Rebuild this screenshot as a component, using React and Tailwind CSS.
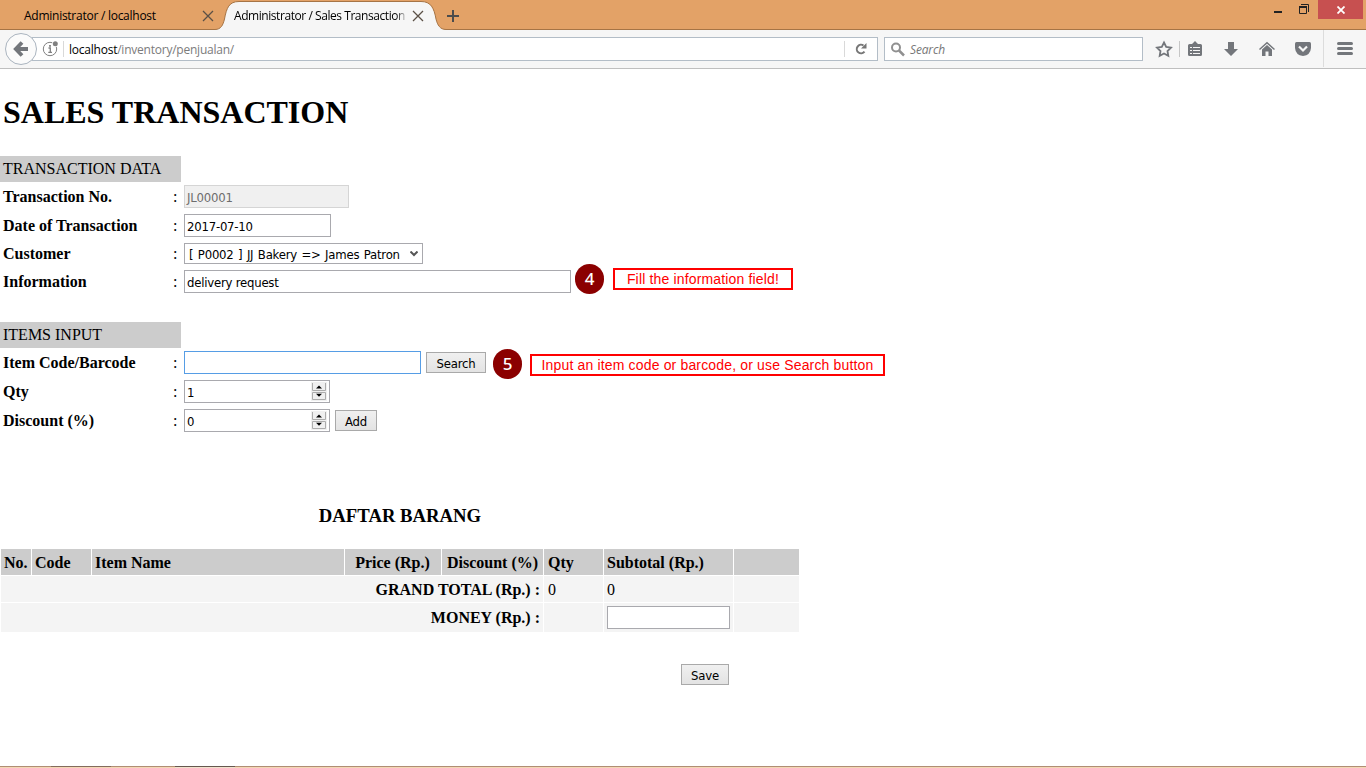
import React from "react";

const ui = "font-['Open_Sans','Noto_Sans',sans-serif]";
const field = "font-['DejaVu_Sans_Condensed','DejaVu_Sans',sans-serif] [font-stretch:condensed] text-[13px] leading-[17px] tracking-[-0.22px] text-black";

function CloseX() {
  return (
    <svg width="12" height="12" viewBox="0 0 12 12" className="shrink-0">
      <path d="M1 1L11 11M11 1L1 11" stroke="#5b5046" strokeWidth="1.3" fill="none" />
    </svg>
  );
}

function TabStrip() {
  return (
    <div className={`relative flex h-[30px] bg-[#e3a267] text-[12px] leading-4 text-black ${ui}`}>
      <div className="absolute inset-x-0 bottom-0 h-px bg-[#a67445]" />
      <div className="flex h-[30px] w-[218px] items-center pt-px pl-6">
        <span className="w-[178px] whitespace-nowrap tracking-[-0.26px]">Administrator / localhost</span>
        <CloseX />
      </div>
      <div className="relative h-[30px] w-[226px]">
        <svg width="242" height="30" viewBox="0 0 242 30" className="absolute top-0 -left-[6px]">
          <path
            d="M0 30V29.5H3C9 29.5 11 25 12.500 19C14.500 8 17 1.500 27 1.500H209C219 1.500 222 8 224 19C225.500 25 228 29.500 234 29.500H241V30Z"
            fill="#f6f6f6"
          />
          <path
            d="M0 29.500H3C9 29.500 11 25 12.500 19C14.500 8 17 1.500 27 1.500H209C219 1.500 222 8 224 19C225.500 25 228 29.500 234 29.500H241"
            fill="none"
            stroke="#a67445"
          />
          <path d="M7 29.500H230" stroke="#f6f6f6" />
        </svg>
        <div className="relative flex h-[30px] items-center pt-px pl-4">
          <span className="w-[178px] whitespace-nowrap">
            <span className="block w-[174px] tracking-[-0.44px] [mask-image:linear-gradient(to_right,black_93%,transparent)]">
              Administrator / Sales Transaction
            </span>
          </span>
          <CloseX />
        </div>
      </div>
      <div className="relative flex h-[30px] items-center pt-0.5 pl-[3px]">
        <svg width="12" height="12" viewBox="0 0 12 12">
          <path d="M6 0V12M0 6H12" stroke="#4c4c4c" strokeWidth="2" />
        </svg>
      </div>
      <div className="ml-auto flex">
        <svg width="45" height="19" viewBox="0 0 45 19">
          <path d="M1 12H9" stroke="#222" strokeWidth="2" />
          <path d="M26.500 6.500H33.500V13.500H26.500Z" fill="none" stroke="#222" />
          <path d="M26 7H34" stroke="#222" strokeWidth="2" />
          <path d="M28 4.500H35.500V12" fill="none" stroke="#222" />
        </svg>
        <div className="mr-[3px] flex h-[19px] w-[45px] items-center justify-center bg-[#c75050]">
          <svg width="8" height="8" viewBox="0 0 8 8">
            <path d="M0.500 0.500L7.500 7.500M7.500 0.500L0.500 7.500" stroke="#fff" strokeWidth="1.8" />
          </svg>
        </div>
      </div>
    </div>
  );
}

function Toolbar() {
  return (
    <div className={`flex h-[39px] items-start border-b border-[#bfbfbf] bg-[#f6f6f6] ${ui}`}>
      <svg width="34" height="34" viewBox="0 0 34 34" className="relative z-10 mt-[2px] ml-1 shrink-0">
        <circle cx="17" cy="17" r="15.500" fill="#fbfbfb" stroke="#aab4bf" />
        <path d="M24 17H12M18 10.500L11.800 17L18 23.500" fill="none" stroke="#73767b" strokeWidth="3.800" />
      </svg>
      <div className="mt-[7px] -ml-[6px] flex h-6 w-[846px] items-center border border-[#b3bdc7] bg-white">
        <svg width="18" height="18" viewBox="0 0 18 18" className="ml-[8px]">
          <circle cx="9" cy="9" r="6.700" fill="none" stroke="#808080" />
          <path d="M7.500 8H9.300V12M7.300 12.300H11" fill="none" stroke="#808080" strokeWidth="1.300" />
          <rect x="8.100" y="5" width="1.800" height="1.800" fill="#808080" />
          <circle cx="14.300" cy="3.700" r="3.200" fill="#fff" />
          <circle cx="14.300" cy="3.700" r="2.500" fill="#808080" />
        </svg>
        <div className="ml-[4px] h-4 w-px bg-[#d9d9d9]" />
        <span className="ml-[5px] pt-[2px] text-[12px] tracking-[-0.23px] text-[#7b7b7b]">
          <span className="text-black">localhost</span>/inventory/penjualan/
        </span>
        <div className="ml-auto h-4 w-px bg-[#d9d9d9]" />
        <svg width="12" height="12" viewBox="0 0 12 12" className="mr-[10px] ml-[10px]">
          <path d="M9.500 8.700A4.300 4.300 0 1 1 8.500 2.500" fill="none" stroke="#777" strokeWidth="2" />
          <path d="M6 5.500H11.500V0Z" fill="#777" />
        </svg>
      </div>
      <div className="mt-[7px] ml-[6px] flex h-6 w-[259px] items-center border border-[#b3bdc7] bg-white">
        <svg width="15" height="15" viewBox="0 0 15 15" className="ml-[5px]">
          <circle cx="6" cy="5.500" r="4" fill="none" stroke="#909090" strokeWidth="2" />
          <path d="M9 8.500L14 13.500" stroke="#909090" strokeWidth="2.500" />
        </svg>
        <span className="ml-[5px] pt-[2px] text-[12px] tracking-[-0.15px] text-[#777] italic">Search</span>
      </div>
      <svg width="223" height="38" viewBox="0 0 223 38" className="shrink-0">
        <path
          d="M21 12.500L23.200 16.900L28 17.600L24.500 21L25.300 25.800L21 23.500L16.700 25.800L17.500 21L14 17.600L18.800 16.900Z"
          fill="none"
          stroke="#73767b"
          strokeWidth="1.800"
        />
        <path d="M36.500 11V27" stroke="#c6c6c6" />
        <path d="M45 15.500Q45 14 46.500 14H49L52 11L55 14H57.500Q59 14 59 15.500V24.500Q59 26 57.500 26H46.500Q45 26 45 24.500Z" fill="#73767b" />
        <path d="M47 17.500H49M50 17.500H57M47 20.500H49M50 20.500H57M47 23.500H49M50 23.500H57" stroke="#f6f6f6" />
        <path d="M85 12H91V19H95L88 26L81 19H85Z" fill="#73767b" />
        <path d="M116.500 19.500L124 12.800L131.500 19.500" fill="none" stroke="#73767b" strokeWidth="1.500" />
        <path d="M119 19.500L124 15L129 19.500V26H125.500V21.500H122.500V26H119Z" fill="#73767b" />
        <path d="M152 13.500Q152 12 153.500 12H166.500Q168 12 168 13.500V18Q167.500 25 160 26Q152.500 25 152 18Z" fill="#73767b" />
        <path d="M156 16.500L160 20.500L164 16.500" fill="none" stroke="#f6f6f6" strokeWidth="2.200" />
        <path d="M180.500 0V37" stroke="#dcdcdc" />
        <path d="M195.500 13.500H208.500M195.500 18.500H208.500M195.500 23.500H208.500" stroke="#73767b" strokeWidth="3" strokeLinecap="round" />
      </svg>
    </div>
  );
}

function SectionHead({ children }) {
  return <div className="h-[26px] w-[181px] bg-[#ccc] pl-[3px] leading-[26px]">{children}</div>;
}

function Row({ label, short, children }) {
  return (
    <div className={`relative flex items-center ${short ? "h-[27px]" : "h-[29px]"}`}>
      <div className="w-[173px] pt-px pl-[3px] leading-[18px] font-bold">{label}</div>
      <div className="w-[11px] pt-px leading-[18px]">:</div>
      {children}
    </div>
  );
}

function Box({ className, children }) {
  return <div className={`flex h-[23px] items-center border pt-px pl-[2px] ${className} ${field}`}>{children}</div>;
}

function Button({ className, children }) {
  return (
    <button className={`flex h-[21px] items-center justify-center border border-[#a9a9a9] bg-linear-to-b from-[#f0f0f0] to-[#e3e3e3] pt-px ${className} ${field}`}>
      {children}
    </button>
  );
}

function Spinner({ value }) {
  return (
    <Box className="w-[146px] justify-between border-[#a9a9ae] bg-white pr-[2px]">
      <span>{value}</span>
      <svg width="16" height="19" viewBox="0 0 16 19" className="-mt-[2px]">
        <rect width="16" height="19" fill="#f0f0f0" />
        <path d="M1.500 1V8.500H14.500V1M1.500 10.500H14.500V17.500H1.500Z" fill="none" stroke="#acacac" />
        <path d="M5 6.500L8 3.500L11 6.500Z" fill="#000" />
        <path d="M5 11.800L8 14.800L11 11.800Z" fill="#000" />
      </svg>
    </Box>
  );
}

function Step({ n, className }) {
  return (
    <div className={`absolute flex h-[30px] w-[29px] items-center justify-center rounded-full bg-[#8b0000] pb-px font-['Noto_Sans',sans-serif] text-[17px] leading-none font-medium text-white ${className}`}>
      {n}
    </div>
  );
}

function Note({ className, children }) {
  return (
    <div className={`absolute flex h-[22px] items-center justify-center border-2 border-[#ff0000] bg-white font-['Liberation_Sans',sans-serif] text-[14px] leading-4 tracking-[0.16px] whitespace-nowrap text-[#ff0000] ${className}`}>
      {children}
    </div>
  );
}

export default function App() {
  return (
    <div className="flex h-[768px] w-[1366px] flex-col overflow-hidden bg-white font-['Liberation_Serif',serif] text-[16px] text-black">
      <TabStrip />
      <Toolbar />
      <main className="flex-1">
        <h1 className="pt-[25px] pl-[3px] text-[32px] leading-[37px] font-bold">SALES TRANSACTION</h1>
        <section className="pt-[25px]">
          <SectionHead>TRANSACTION DATA</SectionHead>
          <Row label="Transaction No.">
            <Box className="w-[165px] border-[#d5d5d5] bg-[#f0f0f0]">
              <span className="text-[#6d6d6d]">JL00001</span>
            </Box>
          </Row>
          <Row label="Date of Transaction">
            <Box className="w-[147px] border-[#a9a9ae]">2017-07-10</Box>
          </Row>
          <Row label="Customer" short>
            <div className={`flex h-[21px] w-[239px] items-center justify-between border border-[#a9a9ae] pt-px pr-[4px] pl-[4px] whitespace-nowrap ${field}`}>
              <span className="[word-spacing:1px]">[ P0002 ] JJ Bakery =&gt; James Patron</span>
              <svg width="8" height="6" viewBox="0 0 8 6" className="-mt-px">
                <path d="M0.500 0.500L4 4L7.500 0.500" fill="none" stroke="#555" strokeWidth="2" />
              </svg>
            </div>
          </Row>
          <Row label="Information">
            <Box className="w-[387px] border-[#a9a9ae]">delivery request</Box>
            <Step n="4" className="top-[-3px] left-[575px]" />
            <Note className="top-px left-[613px] w-[180px]">Fill the information field!</Note>
          </Row>
        </section>
        <section className="pt-[26px]">
          <SectionHead>ITEMS INPUT</SectionHead>
          <Row label="Item Code/Barcode">
            <Box className="w-[237px] border-[#569de5]" />
            <Button className="ml-[5px] w-[60px]">Search</Button>
            <Step n="5" className="top-[1px] left-[493px]" />
            <Note className="top-[6px] left-[530px] w-[355px]">Input an item code or barcode, or use Search button</Note>
          </Row>
          <Row label="Qty">
            <Spinner value="1" />
          </Row>
          <Row label="Discount (%)">
            <Spinner value="0" />
            <Button className="ml-[5px] w-[42px]">Add</Button>
          </Row>
        </section>
        <section className="w-[800px] pt-[69px]">
          <h3 className="text-center text-[18.720px] leading-[24px] font-bold">DAFTAR BARANG</h3>
          <div className="mt-[21px] ml-px grid w-[798px] grid-cols-[30px_59px_252px_96px_101px_59px_129px_65px] grid-rows-[26px_26px_29px] gap-px font-bold whitespace-nowrap *:flex *:items-center *:px-[3px] *:pt-[2px]">
            <div className="bg-[#ccc]">No.</div>
            <div className="bg-[#ccc]">Code</div>
            <div className="bg-[#ccc]">Item Name</div>
            <div className="justify-center bg-[#ccc]">
              <span className="-ml-px">Price (Rp.)</span>
            </div>
            <div className="justify-center bg-[#ccc]">Discount (%)</div>
            <div className="bg-[#ccc]">
              <span className="ml-px">Qty</span>
            </div>
            <div className="bg-[#ccc]">Subtotal (Rp.)</div>
            <div className="bg-[#ccc]" />
            <div className="col-span-5 justify-end bg-[#f4f4f4]">GRAND TOTAL (Rp.) :</div>
            <div className="bg-[#f4f4f4] font-normal">
              <span className="ml-px">0</span>
            </div>
            <div className="bg-[#f4f4f4] font-normal">0</div>
            <div className="bg-[#f4f4f4]" />
            <div className="col-span-5 justify-end bg-[#f4f4f4]">
              <span className="-mt-[2px]">MONEY (Rp.) :</span>
            </div>
            <div className="bg-[#f4f4f4]" />
            <div className="bg-[#f4f4f4]">
              <div className="-mt-[2px] h-[23px] w-[123px] border border-[#a9a9ae] bg-white" />
            </div>
            <div className="bg-[#f4f4f4]" />
          </div>
          <div className="flex pt-[32px] pl-[681px]">
            <Button className="w-[48px]">Save</Button>
          </div>
        </section>
      </main>
      <footer className="flex h-[2px] shrink-0">
        <div className="w-[51px] border-t border-[#b08d74] bg-[#f3d8b4]" />
        <div className="w-[60px] border-t border-[#846a5c] bg-[#f3d8b4]" />
        <div className="w-[64px] border-t border-[#b08d74] bg-[#f3d8b4]" />
        <div className="w-[60px] border-t border-[#66564f] bg-[#f0e2cc]" />
        <div className="flex-1 border-t border-[#b08d74] bg-[#f3d8b4]" />
      </footer>
    </div>
  );
}
